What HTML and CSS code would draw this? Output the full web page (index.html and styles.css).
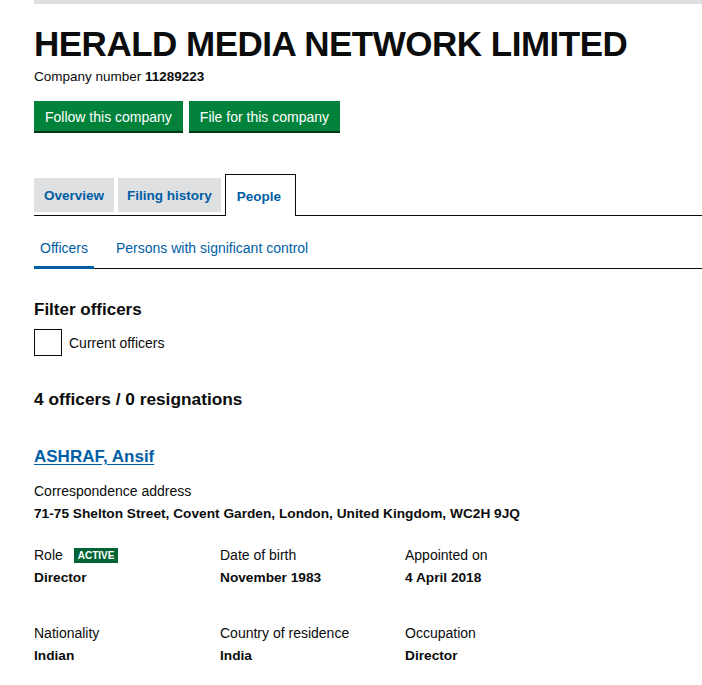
FILE: index.html
```html
<!DOCTYPE html>
<html lang="en">
<head>
<meta charset="utf-8">
<title>HERALD MEDIA NETWORK LIMITED - People</title>
<link rel="stylesheet" href="styles.css">
</head>
<body>
<div class="page">
  <div class="topbar"></div>
  <h1 class="heading">HERALD MEDIA NETWORK LIMITED</h1>
  <p class="company-number">Company number <strong>11289223</strong></p>
  <div class="actions">
    <a class="button" href="#">Follow this company</a>
    <a class="button" href="#">File for this company</a>
  </div>

  <nav class="tabs">
    <a class="tab tab-overview" href="#">Overview</a>
    <a class="tab" href="#">Filing history</a>
    <a class="tab active" href="#">People</a>
  </nav>

  <nav class="subtabs">
    <a class="subtab active" href="#">Officers</a>
    <a class="subtab" href="#">Persons with significant control</a>
  </nav>

  <h2 class="filter-title">Filter officers</h2>
  <label class="checkbox"><span class="box"></span><span class="checkbox-label">Current officers</span></label>

  <h2 class="count">4 officers / 0 resignations</h2>

  <div class="officer">
    <h3 class="officer-name"><a href="#">ASHRAF, Ansif</a></h3>
    <dl class="address">
      <dt>Correspondence address</dt>
      <dd>71-75 Shelton Street, Covent Garden, London, United Kingdom, WC2H 9JQ</dd>
    </dl>
    <div class="grid">
      <dl class="field">
        <dt>Role <span class="tag">ACTIVE</span></dt>
        <dd>Director</dd>
      </dl>
      <dl class="field">
        <dt>Date of birth</dt>
        <dd>November 1983</dd>
      </dl>
      <dl class="field">
        <dt>Appointed on</dt>
        <dd>4 April 2018</dd>
      </dl>
      <dl class="field">
        <dt>Nationality</dt>
        <dd>Indian</dd>
      </dl>
      <dl class="field">
        <dt>Country of residence</dt>
        <dd>India</dd>
      </dl>
      <dl class="field">
        <dt>Occupation</dt>
        <dd>Director</dd>
      </dl>
    </div>
  </div>
</div>
</body>
</html>
```

FILE: styles.css
```css
* { box-sizing: border-box; }
html, body { margin: 0; padding: 0; background: #fff; }
body {
  font-family: "Liberation Sans", Arial, sans-serif;
  color: #0b0c0c;
  font-size: 14px;
}
.page { padding-left: 34px; }
.topbar { height: 4px; background: #dee0e2; }

.heading {
  margin: 20px 0 0;
  font-size: 35px;
  line-height: 40px;
  font-weight: 700;
  letter-spacing: -0.5px;
}
.company-number { margin: 5px 0 0; font-size: 13.5px; line-height: 16px; }

.actions { display: flex; gap: 6px; margin-top: 16px; }
.button {
  display: block;
  background: #00823b;
  color: #fff;
  text-decoration: none;
  font-size: 14px;
  line-height: 16px;
  padding: 8px 11px 4px;
  height: 30px;
  box-shadow: 0 2px 0 #003618;
}

.tabs {
  display: flex;
  align-items: flex-end;
  gap: 4px;
  margin-top: 43px;
  border-bottom: 1px solid #0b0c0c;
}
.tab {
  display: block;
  background: #dee0e2;
  color: #005ea5;
  font-weight: 700;
  text-decoration: none;
  font-size: 13.5px;
  line-height: 16px;
  padding: 10px 9px 8px;
  height: 34px;
  margin-bottom: 3px;
}
.tab-overview { padding-left: 10px; padding-right: 10px; }
.tab.active {
  background: #fff;
  border: 1px solid #0b0c0c;
  border-bottom: 0;
  height: 42px;
  margin-bottom: -1px;
  padding: 14px 14px 0 11px;
}

.subtabs {
  display: flex;
  border-bottom: 1px solid #0b0c0c;
}
.subtab {
  display: block;
  color: #005ea5;
  text-decoration: none;
  font-size: 14px;
  line-height: 16px;
  padding: 24px 6px 10px;
  margin-right: 16px;
}
.subtab.active {
  border-bottom: 3px solid #005ea5;
  margin-bottom: -1px;
}

.filter-title {
  margin: 30px 0 0;
  font-size: 17px;
  line-height: 22px;
  font-weight: 700;
}
.checkbox { display: flex; align-items: center; gap: 7px; margin-top: 8px; }
.box { width: 28px; height: 27px; border: 1.5px solid #0b0c0c; }
.checkbox-label { font-size: 14px; }

.count {
  margin: 32px 0 0;
  font-size: 17.3px;
  line-height: 22px;
  font-weight: 700;
}

.officer-name {
  margin: 36px 0 0;
  font-size: 17px;
  line-height: 22px;
  font-weight: 700;
}
.officer-name a { color: #005ea5; text-decoration: underline; text-underline-offset: 2px; }

dl { margin: 0; }
dd { margin: 0; font-weight: 700; }
dt, dd { line-height: 16px; }
dt { font-size: 14px; }
dd { font-size: 13.7px; }

.address { margin-top: 15px; }
.address dd { margin-top: 7px; }

.grid {
  display: grid;
  grid-template-columns: 186px 185px 1fr;
  row-gap: 39px;
  margin-top: 25px;
}
.field dd { margin-top: 7px; }
.tag {
  display: inline-block;
  margin-left: 7px;
  background: #006435;
  color: #fff;
  font-size: 10px;
  font-weight: 700;
  line-height: 15px;
  padding: 0 4px;
  vertical-align: 1px;
}
```
